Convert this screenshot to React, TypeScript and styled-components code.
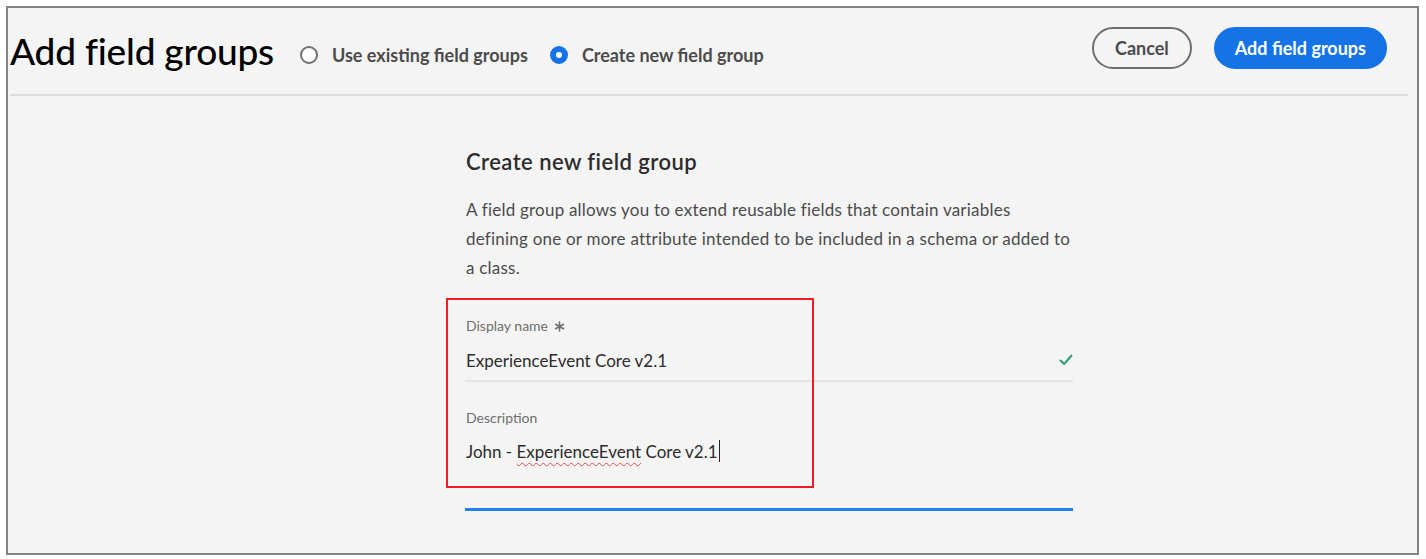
import React from "react";
import styled, { createGlobalStyle } from "styled-components";

const Global = createGlobalStyle`
  html, body { margin: 0; padding: 0; background: #ffffff; }
  body { font-family: Lato, "Open Sans", sans-serif; }
  * { box-sizing: border-box; }
`;

const Page = styled.div`
  width: 1426px;
  height: 559px;
  padding: 6px 7px 0 6px;
  background: #ffffff;
  overflow: hidden;
`;

const Frame = styled.div`
  height: 549px;
  border: 2px solid #838383;
  background: #f4f4f4;
  display: flex;
  flex-direction: column;
`;

const Header = styled.header`
  height: 86px;
  display: flex;
  align-items: center;
  padding: 0 30px 6px 2px;
`;

const Title = styled.h1`
  margin: 4px 26px 0 0;
  font-family: Lato, sans-serif;
  font-weight: 500;
  font-size: 37px;
  letter-spacing: -0.2px;
  color: #000000;
`;

const RadioGroup = styled.div`
  display: flex;
  align-items: center;
  gap: 22px;
  margin-top: 13px;
`;

const RadioItem = styled.label`
  display: flex;
  align-items: center;
  gap: 14px;
  font-family: Lato, sans-serif;
  font-weight: 700;
  font-size: 18px;
  color: #4b4b4b;
`;

const RadioDot = styled.span<{ $checked?: boolean }>`
  width: 18px;
  height: 18px;
  border-radius: 50%;
  border: ${(p) => (p.$checked ? "6px solid #1473e6" : "2px solid #707070")};
  background: #ffffff;
  flex: none;
`;

const Spacer = styled.div`
  flex: 1;
`;

const Actions = styled.div`
  display: flex;
  align-items: center;
  gap: 22px;
`;

const Button = styled.button<{ $primary?: boolean }>`
  height: 42px;
  border-radius: 21px;
  padding: 0 ${(p) => (p.$primary ? "19px" : "21px")};
  font-family: Lato, sans-serif;
  font-weight: 700;
  font-size: 18px;
  cursor: pointer;
  border: 2px solid ${(p) => (p.$primary ? "#1473e6" : "#6e6e6e")};
  background: ${(p) => (p.$primary ? "#1473e6" : "transparent")};
  color: ${(p) => (p.$primary ? "#ffffff" : "#4b4b4b")};
`;

const Divider = styled.div`
  height: 2px;
  background: #dcdcdc;
  margin: 0 9px 0 2px;
`;

const Body = styled.main`
  flex: 1;
  padding: 53px 0 0 457px;
`;

const Column = styled.div`
  width: 608px;
`;

const Heading = styled.h2`
  margin: 0 0 0 1px;
  font-family: Lato, sans-serif;
  font-weight: 600;
  font-size: 22px;
  letter-spacing: 0.45px;
  line-height: 26px;
  color: #2c2c2c;
`;

const Paragraph = styled.p`
  margin: 20px 0 0 1px;
  font-family: Lato, sans-serif;
  font-size: 17px;
  letter-spacing: 0.22px;
  line-height: 29px;
  color: #4b4b4b;
  white-space: nowrap;
`;

const Fields = styled.div`
  position: relative;
  margin-top: 16px;
  padding-top: 19px;
`;

const Annotation = styled.div`
  position: absolute;
  left: -19px;
  top: 0;
  width: 368px;
  height: 190px;
  border: 2px solid #ee1c24;
  pointer-events: none;
`;

const Field = styled.div<{ $active?: boolean }>`
  border-bottom: ${(p) => (p.$active ? "3px solid #2680eb" : "2px solid #e3e3e3")};
  margin-bottom: ${(p) => (p.$active ? "0" : "27px")};
`;

const Label = styled.div`
  padding-left: 1px;
  font-family: Lato, sans-serif;
  font-size: 14px;
  line-height: 18px;
  color: #6e6e6e;
  display: flex;
  align-items: center;
  gap: 6px;
`;

const ValueRow = styled.div<{ $tall?: boolean }>`
  display: flex;
  align-items: center;
  height: ${(p) => (p.$tall ? "77px" : "40px")};
  padding-bottom: ${(p) => (p.$tall ? "37px" : "0")};
  margin-top: ${(p) => (p.$tall ? "4px" : "5px")};
  padding-left: 1px;
  font-family: Lato, sans-serif;
  font-size: 17px;
  color: #2c2c2c;
`;

const Value = styled.span`
  flex: 1;
  display: flex;
  align-items: center;
  white-space: pre;
`;

const Misspelled = styled.span`
  text-decoration: underline wavy #e34850;
  text-decoration-thickness: 1px;
  text-underline-offset: 4px;
`;

const Caret = styled.span`
  display: inline-block;
  width: 1px;
  height: 22px;
  background: #222222;
  margin-left: 1px;
`;

const Star = () => (
  <svg width="11" height="11" viewBox="0 0 11 11" fill="none">
    <g stroke="#6e6e6e" strokeWidth="1.6" strokeLinecap="round">
      <path d="M5.5 1 V10" />
      <path d="M1.6 3.25 L9.4 7.75" />
      <path d="M1.6 7.75 L9.4 3.25" />
    </g>
  </svg>
);

const Check = () => (
  <svg width="14" height="12" viewBox="0 0 14 12" fill="none">
    <path d="M1.5 6.5 L5.2 10 L12.5 1.5" stroke="#2d9d78" strokeWidth="2" strokeLinecap="round" strokeLinejoin="round" />
  </svg>
);

export default function App() {
  return (
    <>
      <Global />
      <Page>
        <Frame>
          <Header>
            <Title>Add field groups</Title>
            <RadioGroup>
              <RadioItem>
                <RadioDot />
                Use existing field groups
              </RadioItem>
              <RadioItem>
                <RadioDot $checked />
                Create new field group
              </RadioItem>
            </RadioGroup>
            <Spacer />
            <Actions>
              <Button>Cancel</Button>
              <Button $primary>Add field groups</Button>
            </Actions>
          </Header>
          <Divider />
          <Body>
            <Column>
              <Heading>Create new field group</Heading>
              <Paragraph>
                A field group allows you to extend reusable fields that contain variables
                <br />
                defining one or more attribute intended to be included in a schema or added to
                <br />
                a class.
              </Paragraph>
              <Fields>
                <Annotation />
                <Field>
                  <Label>
                    Display name <Star />
                  </Label>
                  <ValueRow>
                    <Value>ExperienceEvent Core v2.1</Value>
                    <Check />
                  </ValueRow>
                </Field>
                <Field $active>
                  <Label>Description</Label>
                  <ValueRow $tall>
                    <Value>
                      {"John - "}
                      <Misspelled>ExperienceEvent</Misspelled>
                      {" Core v2.1"}
                      <Caret />
                    </Value>
                  </ValueRow>
                </Field>
              </Fields>
            </Column>
          </Body>
        </Frame>
      </Page>
    </>
  );
}
